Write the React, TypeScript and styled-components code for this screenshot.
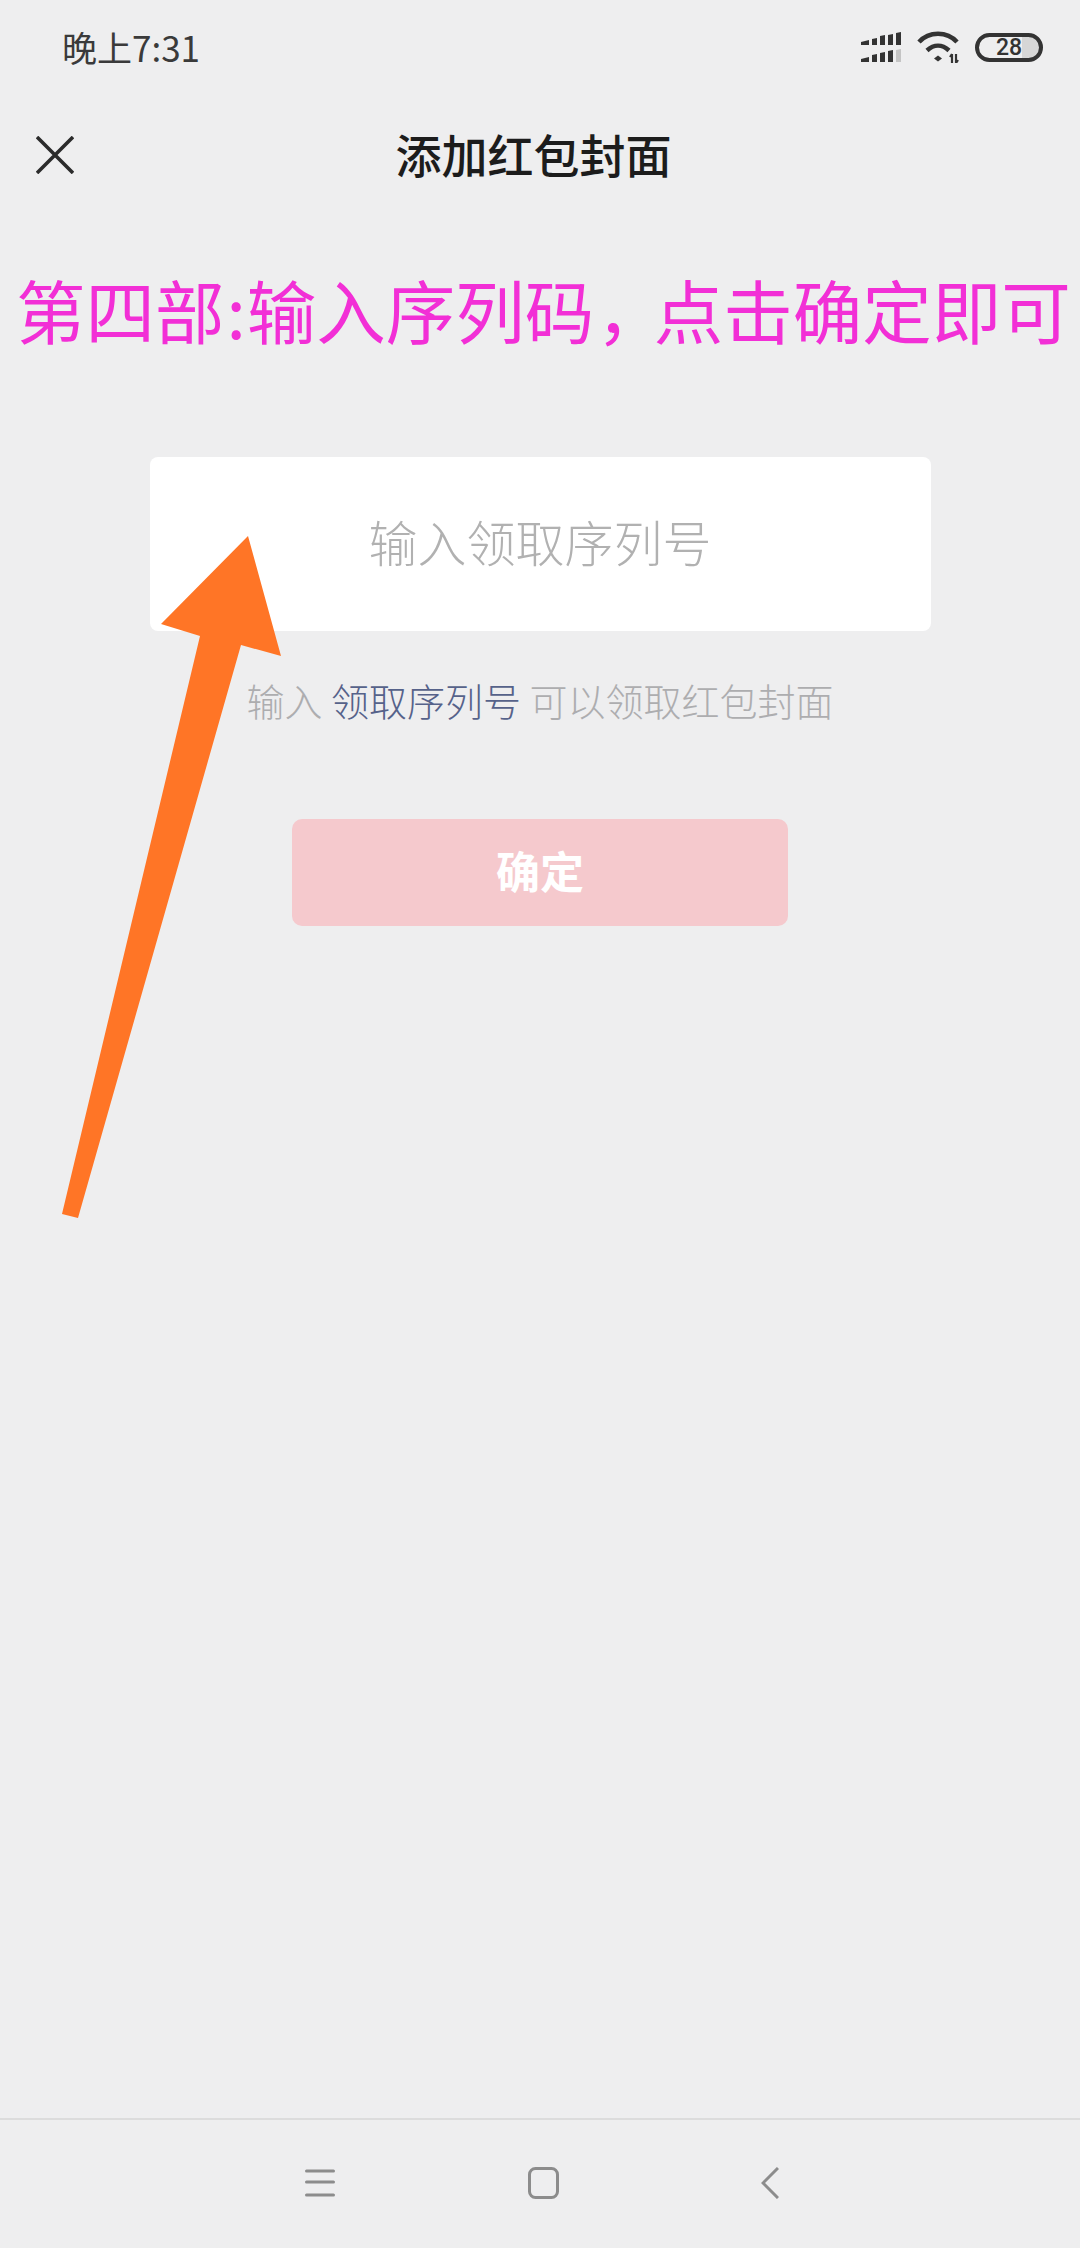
import React, { FC } from "react";
import styled, { createGlobalStyle } from "styled-components";

const cjk = `"Noto Sans CJK SC", "Liberation Sans", sans-serif`;

const GlobalStyle = createGlobalStyle`
  html, body {
    margin: 0;
    padding: 0;
    background: #eeeeef;
  }
`;

const Page = styled.div`
  position: relative;
  width: 1080px;
  height: 2248px;
  display: flex;
  flex-direction: column;
  background: #eeeeef;
  font-family: ${cjk};
  overflow: hidden;
`;

const StatusBar = styled.div`
  height: 96px;
  padding: 0 37px 2px 62px;
  box-sizing: border-box;
  display: flex;
  align-items: center;
  justify-content: space-between;
`;

const Time = styled.span`
  font-size: 35px;
  line-height: 40px;
  color: #3a3a3a;
`;

const StatusIcons = styled.div`
  display: flex;
  align-items: center;
`;

const Battery = styled.span`
  width: 68px;
  height: 29px;
  margin-left: 16px;
  box-sizing: border-box;
  border: 4px solid #333;
  border-radius: 15px;
  display: flex;
  align-items: center;
  justify-content: center;
  background: linear-gradient(to right, transparent 72%, #d6d6d6 72%);
  font-family: "Roboto", sans-serif;
  font-size: 23px;
  font-weight: 500;
  color: #333;
`;

const NavBar = styled.div`
  height: 118px;
  padding: 0 49px 0 36px;
  display: grid;
  grid-template-columns: 1fr auto 1fr;
  align-items: center;
`;

const CloseButton = styled.button`
  width: 38px;
  height: 38px;
  padding: 0;
  border: 0;
  background: none;
  color: #2b2b2b;
`;

const Title = styled.h1`
  margin: 0 0 4px;
  font-size: 46px;
  line-height: 60px;
  font-weight: 500;
  color: #1c1c1c;
`;

const Heading = styled.div`
  margin-top: 63px;
  height: 64px;
  padding-left: 16px;
  font-size: 69.5px;
  line-height: 64px;
  color: #f22fd6;
  white-space: nowrap;
`;

const Colon = styled.span`
  margin: 0 1px 0 2px;
`;

const Comma = styled.span`
  margin-left: 2px;
  letter-spacing: -12px;
`;

const Form = styled.div`
  margin-top: 116px;
  display: flex;
  flex-direction: column;
  align-items: center;
`;

const Field = styled.div`
  width: 781px;
  height: 174px;
  box-sizing: border-box;
  padding-bottom: 8px;
  border-radius: 8px;
  background: #fff;
  display: flex;
  align-items: center;
  justify-content: center;
  font-size: 49px;
  font-weight: 300;
  color: #b1b1b1;
`;

const Hint = styled.p`
  margin: 47px 0 0;
  font-size: 38px;
  line-height: 44px;
  font-weight: 300;
  color: #adadaf;
  white-space: nowrap;
`;

const HintLink = styled.span`
  color: #56628a;
`;

const Confirm = styled.button`
  margin-top: 97px;
  width: 496px;
  height: 107px;
  padding: 0 0 5px;
  border: 0;
  border-radius: 10px;
  background: #f5c9cd;
  font-family: inherit;
  font-size: 44px;
  font-weight: 700;
  color: #fff;
`;

const BottomBar = styled.div`
  margin-top: auto;
  height: 130px;
  box-sizing: border-box;
  border-top: 2px solid #dcdcdc;
  padding: 47px 0 0 305px;
  display: grid;
  grid-template-columns: 223px 233px auto;
  justify-content: start;
  align-items: start;
`;

const Arrow = styled.svg`
  position: absolute;
  left: 0;
  top: 0;
  pointer-events: none;
`;

const SignalIcon: FC = () => (
  <svg width="40" height="30" viewBox="0 0 40 30">
    <g fill="#333">
      <path d="M0 10l8-2v5H0zM11 7l5-1v7h-5zM19 4l5-1v10h-5zM27 3l5-1v11h-5zM35 1l5-1v13h-5z" />
      <path d="M0 27l8-2v5H0zM11 23l5-1v8h-5zM19 21l5-1v10h-5zM27 19l5-1v12h-5z" />
    </g>
    <path d="M35 18l5-1v13h-5z" fill="#c4c4c4" />
  </svg>
);

const WifiIcon: FC = () => (
  <svg width="42" height="32" viewBox="0 0 42 32" style={{ marginLeft: 16 }}>
    <g fill="none" stroke="#333" strokeWidth="4.5">
      <path d="M2 11C12 0 30 0 40 11" />
      <path d="M10 19.5c7-6.5 15-6.5 22 0" />
    </g>
    <path d="M17 27.5l4-3 4 3-4 3z" fill="#333" />
    <path d="M35 23v9M39 23v9M33 26l2-3M41 29l-2 3" fill="none" stroke="#333" strokeWidth="2.2" />
  </svg>
);

const App: FC = () => (
  <Page>
    <GlobalStyle />
    <StatusBar>
      <Time>晚上7:31</Time>
      <StatusIcons>
        <SignalIcon />
        <WifiIcon />
        <Battery>28</Battery>
      </StatusIcons>
    </StatusBar>
    <NavBar>
      <CloseButton>
        <svg width="38" height="38" viewBox="0 0 38 38" fill="none" stroke="currentColor" strokeWidth="3.6">
          <path d="M1 1l36 36M37 1L1 37" />
        </svg>
      </CloseButton>
      <Title>添加红包封面</Title>
    </NavBar>
    <Heading>
      第四部<Colon>:</Colon>输入序列码<Comma>，</Comma>点击确定即可
    </Heading>
    <Form>
      <Field>输入领取序列号</Field>
      <Hint>
        输入 <HintLink>领取序列号</HintLink> 可以领取红包封面
      </Hint>
      <Confirm>确定</Confirm>
    </Form>
    <BottomBar>
      <svg width="30" height="32" viewBox="0 0 30 32" stroke="#8c8c8c" strokeWidth="3" strokeLinecap="round">
        <path d="M1.5 4h27M1.5 15h27M1.5 28h27" />
      </svg>
      <svg width="31" height="32" viewBox="0 0 31 32" fill="none" stroke="#8c8c8c" strokeWidth="3">
        <rect x="1.5" y="1.5" width="28" height="29" rx="6" />
      </svg>
      <svg width="18" height="32" viewBox="0 0 18 32" fill="none" stroke="#8c8c8c" strokeWidth="3">
        <path d="M17 1L2 16l15 15" />
      </svg>
    </BottomBar>
    <Arrow width="1080" height="2248" viewBox="0 0 1080 2248">
      <path d="M248 536L161 624L200 636L62 1214L78 1218L241 645L281 656Z" fill="#ff7526" />
    </Arrow>
  </Page>
);

export default App;
